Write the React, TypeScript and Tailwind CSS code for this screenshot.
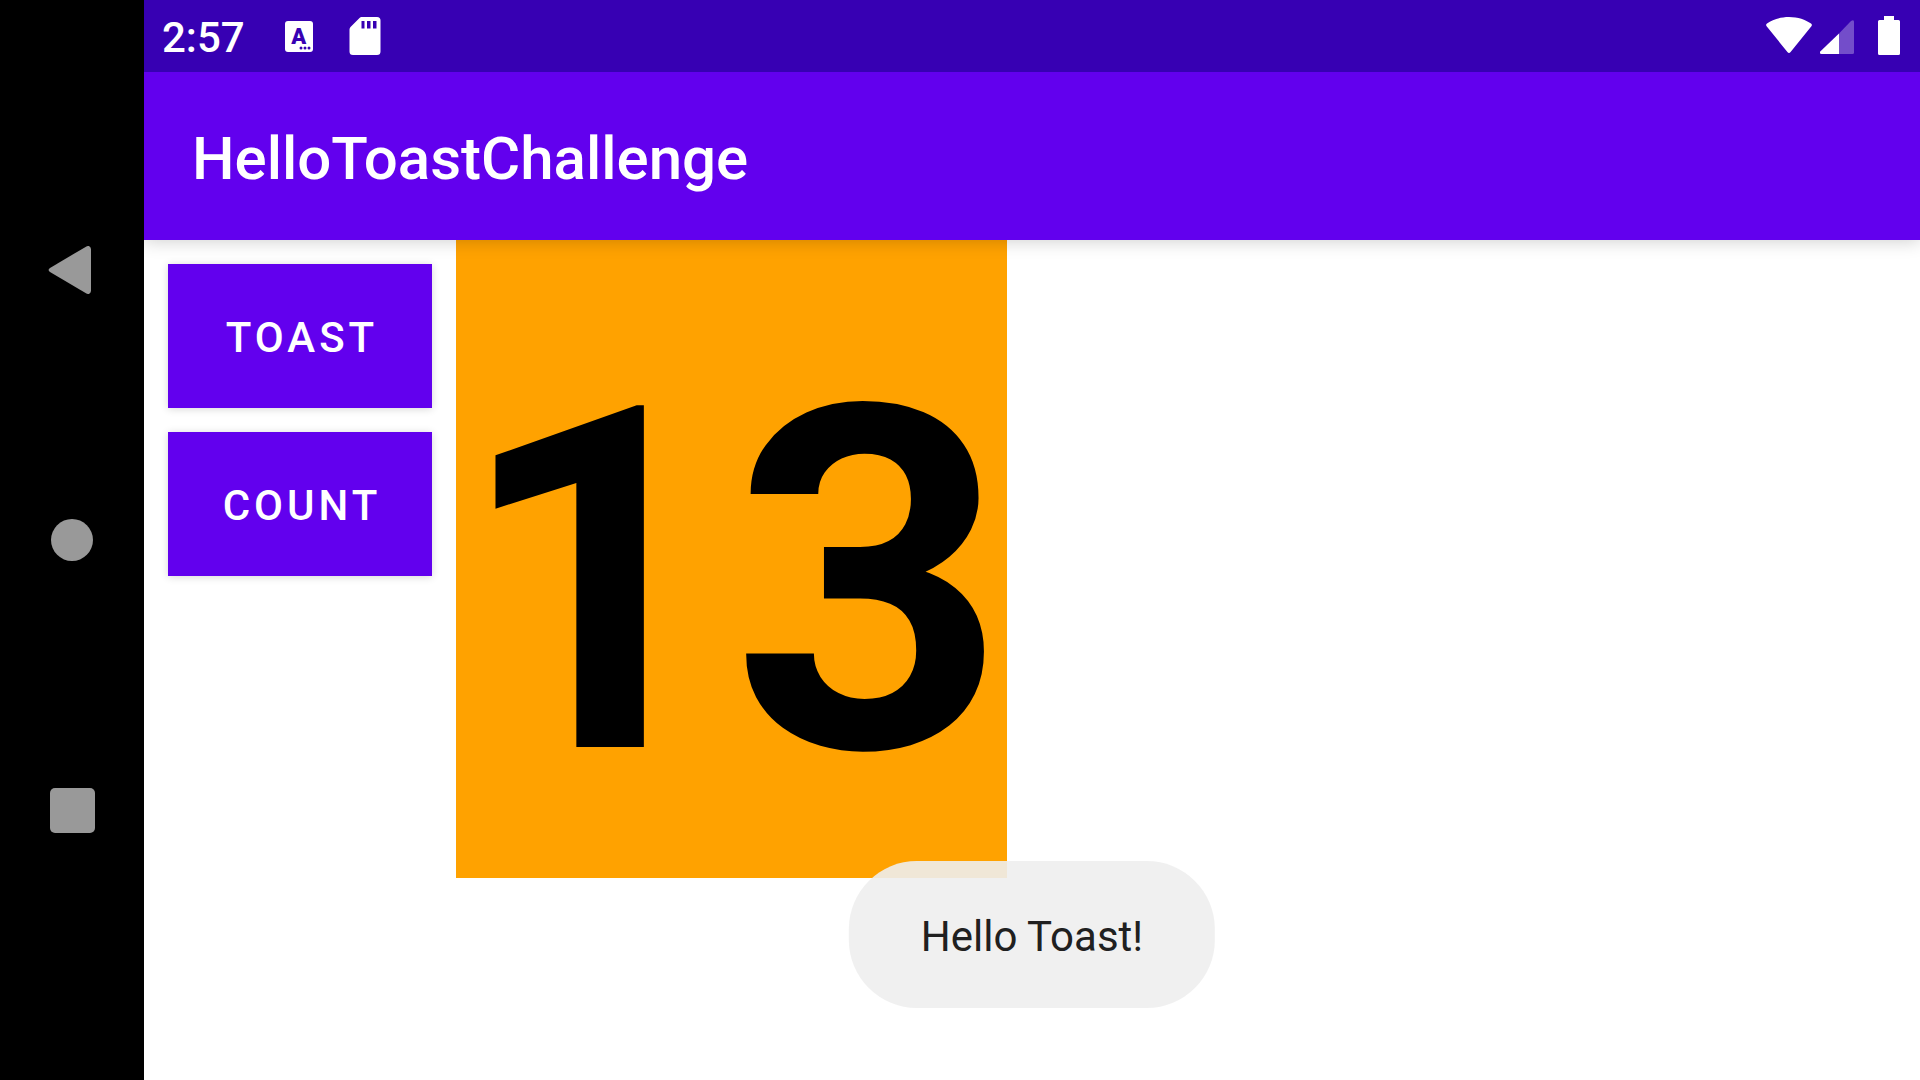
import { useState } from "react";

function NavigationBar() {
  return (
    <nav
      aria-label="System navigation"
      className="flex w-36 shrink-0 flex-col bg-black"
    >
      <div className="flex-1" />
      <button type="button" aria-label="Back" className="flex flex-[2] items-center justify-center pr-1">
        <svg width="48" height="48" viewBox="0 0 48 48" fill="#999999" aria-hidden="true">
          <path d="M40.400 0.400 4 21.900Q1.200 24 4 26.100L40.400 47.600Q44.300 49.200 45 45V3Q44.300 -1.200 40.400 .4Z" />
        </svg>
      </button>
      <button type="button" aria-label="Home" className="flex flex-[2] items-center justify-center">
        <span className="size-[42px] rounded-full bg-[#999999]" />
      </button>
      <button type="button" aria-label="Recent apps" className="flex flex-[2] items-center justify-center">
        <span className="size-[45px] rounded-[5px] bg-[#999999]" />
      </button>
      <div className="flex-1" />
    </nav>
  );
}

function StatusBar() {
  return (
    <div className="z-20 flex h-18 items-center justify-between bg-[#3700b3] pr-5 pl-[18px] text-white">
      <div className="flex items-center">
        <time className="pt-1 text-[42px] leading-[48px] font-medium">2:57</time>
        <span
          aria-hidden="true"
          className="relative ml-10 flex h-[31px] w-7 justify-center rounded-[3px] bg-white text-[22px] leading-[31px] font-black text-[#3700b3]"
        >
          A
          <svg className="absolute right-[2px] bottom-[2px]" width="12" height="4" viewBox="0 0 12 4" fill="#3700b3">
            <circle cx="2" cy="2" r="1.500" />
            <circle cx="6" cy="2" r="1.500" />
            <circle cx="10" cy="2" r="1.500" />
          </svg>
        </span>
        <svg className="ml-9" width="32" height="38" viewBox="0 0 32 38" aria-hidden="true">
          <path
            fill="#ffffff"
            fillRule="evenodd"
            d="M12.500 0H28Q31.500 0 31.500 3.500V34.500Q31.500 38 28 38H4Q.5 38 .5 34.500V12.500Q.5 11 1.500 10L10.500 1Q11.500 0 12.500 0ZM12.500 4V11.500H15.500V4ZM18 4V11.500H21.500V4ZM24 4V11.500H27.500V4Z"
          />
        </svg>
      </div>
      <div className="flex items-center pb-px" aria-hidden="true">
        <svg width="46" height="38" viewBox="0 0 46 38" fill="#ffffff">
          <path d="M23 0C32 0 39.500 2.800 45 6.600Q46.600 7.800 45.400 9.300L24.600 35Q23 37 21.400 35L.6 9.300Q-.6 7.800 1 6.600C6.500 2.800 14 0 23 0Z" />
        </svg>
        <svg className="ml-2" width="34" height="38" viewBox="0 0 34 38" fill="#ffffff">
          <path d="M19 16.500 31 4.100Q34 2 34 5V35.500Q34 37 32.500 37H19Z" opacity="0.300" />
          <path d="M19 16.500V37H1.500Q-.5 37 0 34.800Z" />
        </svg>
        <svg className="ml-6" width="22" height="39" viewBox="0 0 22 39" fill="#ffffff">
          <path d="M6 0H16V4H20.500Q22 4 22 5.500V37.500Q22 39 20.500 39H1.500Q0 39 0 37.500V5.500Q0 4 1.500 4H6Z" />
        </svg>
      </div>
    </div>
  );
}

function ActionButton({ label, onClick }: { label: string; onClick?: () => void }) {
  return (
    <button
      type="button"
      onClick={onClick}
      className="h-36 w-66 bg-[#6200ee] pt-1 pl-1 text-[42px] leading-[48px] font-medium tracking-[4px] text-white uppercase shadow-[0_1px_8px_rgba(0,0,0,0.16)]"
    >
      {label}
    </button>
  );
}

export default function App() {
  const [count, setCount] = useState(13);

  return (
    <div className="flex min-h-screen bg-white font-[Roboto,sans-serif]">
      <NavigationBar />
      <div className="relative flex min-w-0 flex-1 flex-col">
        <StatusBar />
        <header className="z-10 flex h-42 items-center bg-[#6200ee] px-12 pt-1.5 shadow-[0_2px_16px_rgba(0,0,0,0.18)]">
          <h1 className="text-[60px] leading-[72px] font-medium text-white">HelloToastChallenge</h1>
        </header>
        <main className="flex flex-1 items-start gap-6 pl-6">
          <div className="flex flex-col gap-6 pt-6">
            <ActionButton label="Toast" />
            <ActionButton label="Count" onClick={() => setCount(count + 1)} />
          </div>
          <output className="bg-[#ffa200] pt-12 text-[480px] leading-[590px] font-bold text-black">
            {count}
          </output>
        </main>
        <div
          role="status"
          className="absolute bottom-18 left-1/2 z-20 -translate-x-1/2 rounded-[68px] bg-[#eeeeee]/90 px-18 pt-[50px] pb-[46px] text-[42px] leading-[51px] whitespace-nowrap text-[#202020]"
        >
          Hello Toast!
        </div>
      </div>
    </div>
  );
}
